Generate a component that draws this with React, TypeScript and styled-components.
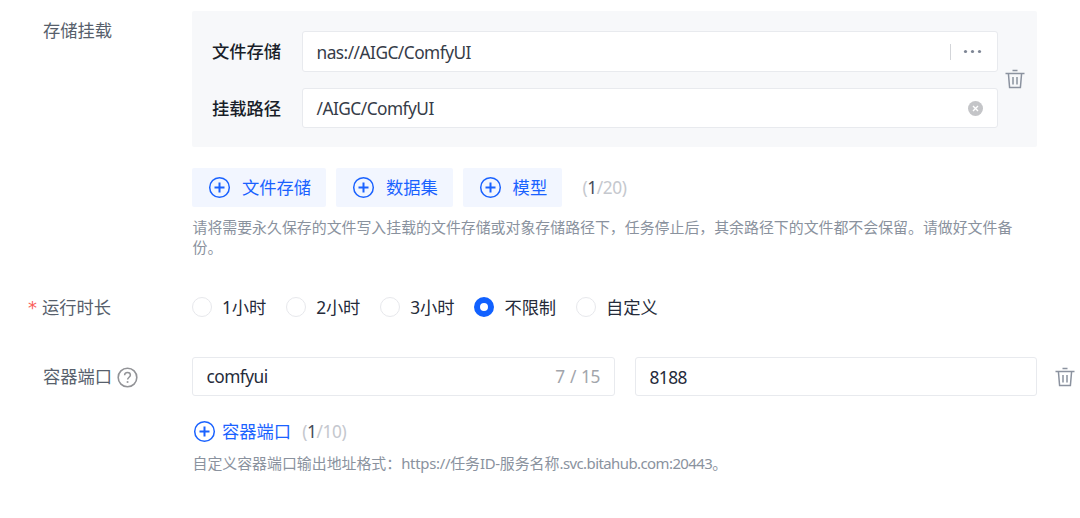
import React from "react";
import styled, { createGlobalStyle } from "styled-components";

const GlobalStyle = createGlobalStyle`
  * { box-sizing: border-box; }
  body {
    margin: 0;
    background: #fff;
    color: #252b3a;
    font-family: "Noto Sans", "Noto Sans CJK SC", sans-serif;
    font-size: 17.3px;
    line-height: 24px;
  }
`;

const Form = styled.main`
  width: 1080px;
  height: 518px;
  padding-top: 11px;
  overflow: hidden;
`;

const FormItem = styled.section<{ $gap?: number }>`
  display: flex;
  align-items: flex-start;
  margin-top: ${(p) => p.$gap ?? 0}px;
`;

const Label = styled.div<{ $top: number; $indent?: number }>`
  flex: 0 0 192px;
  display: flex;
  align-items: center;
  height: 24px;
  margin-top: ${(p) => p.$top}px;
  padding-left: ${(p) => p.$indent ?? 43}px;
  color: #575f6c;
  white-space: nowrap;
  svg { margin-left: 5px; }
`;

const Required = styled.span`
  width: 14px;
  color: #fa5e5a;
  font-family: "DejaVu Sans", sans-serif;
  font-size: 18px;
`;

const Content = styled.div`
  width: 888px;
`;

const MountPanel = styled.div`
  display: flex;
  width: 845px;
  height: 136px;
  padding: 20px 12px 0 20px;
  border-radius: 2px;
  background: #f7f8fa;
`;

const MountFields = styled.div`
  width: 786px;
  display: flex;
  flex-direction: column;
  gap: 16px;
`;

const MountField = styled.div`
  display: flex;
  align-items: center;
`;

const FieldName = styled.span<{ $drop?: number }>`
  width: 90px;
  padding-top: ${(p) => p.$drop ?? 0}px;
  font-weight: 500;
  color: #191e29;
`;

const Field = styled.div<{ $width: number; $height?: number }>`
  display: flex;
  align-items: center;
  justify-content: space-between;
  width: ${(p) => p.$width}px;
  height: ${(p) => p.$height ?? 39}px;
  padding: 0 14px 0 13.5px;
  border: 1px solid #e8eaee;
  border-radius: 3px;
  background: #fff;
`;

const Value = styled.span<{ $drop?: number }>`
  padding-top: ${(p) => p.$drop ?? 1}px;
  letter-spacing: -0.52px;
  white-space: nowrap;
`;

const MountValue = styled(Value)`
  color: #363c48;
`;

const Counter = styled.span`
  color: #a2a5ab;
  letter-spacing: -0.45px;
  word-spacing: 1.2px;
`;

const Picker = styled.span`
  display: flex;
  align-items: center;
  gap: 12px;
  height: 16px;
  padding-left: 12px;
  border-left: 1px solid #d3d5d9;
`;

const RemoveButton = styled.button<{ $top: number; $left: number }>`
  display: block;
  width: 20px;
  height: 20px;
  padding: 0;
  margin: ${(p) => p.$top}px 0 0 ${(p) => p.$left}px;
  border: 0;
  background: none;
`;

const AddBar = styled.div`
  display: flex;
  align-items: center;
  gap: 10px;
  margin-top: 21px;
`;

const AddButton = styled.button`
  display: flex;
  align-items: center;
  gap: 11px;
  height: 39px;
  padding: 0 14.8px 0 16px;
  border: 0;
  border-radius: 2px;
  background: #f2f6ff;
  color: #1a62ff;
  font: inherit;
  white-space: nowrap;
`;

const AddLink = styled.button`
  display: flex;
  align-items: center;
  gap: 6px;
  padding: 0 0 0 1px;
  border: 0;
  background: none;
  color: #1a62ff;
  font: inherit;
`;

const LinkText = styled.span`
  padding-top: 2px;
`;

const Quota = styled.span<{ $left?: number; $drop?: number }>`
  margin-left: ${(p) => p.$left ?? 0}px;
  padding-top: ${(p) => p.$drop ?? 0}px;
  color: #c5c8ce;
  letter-spacing: -0.4px;
  b { font-weight: 400; color: #454b59; }
`;

const Hint = styled.p<{ $top: number }>`
  width: 836px;
  margin: ${(p) => p.$top}px 0 0 0.5px;
  color: #8a929e;
  font-size: 14.92px;
  line-height: 20px;
`;

const Latin = styled.span<{ $spacing?: number }>`
  letter-spacing: ${(p) => p.$spacing ?? -0.3}px;
`;

const RadioGroup = styled.div`
  display: flex;
  align-items: center;
  height: 24px;
  gap: 20px;
`;

const RadioOption = styled.label`
  display: flex;
  align-items: center;
  gap: 10px;
  letter-spacing: -0.1px;
  white-space: nowrap;
`;

const RadioText = styled.span`
  padding-top: 1px;
`;

const RadioDot = styled.span<{ $checked: boolean }>`
  width: 20px;
  height: 20px;
  border-radius: 50%;
  background: #fff;
  border: ${(p) => (p.$checked ? "6px solid #1161ff" : "1px solid #e7e8ec")};
`;

const PortRow = styled.div`
  display: flex;
  gap: 20px;
`;

const LinkBar = styled.div`
  display: flex;
  align-items: center;
  height: 24px;
  margin-top: 23px;
`;

const PlusIcon = () => (
  <svg width="23" height="23" viewBox="0 0 23 23" fill="none" stroke="#1a62ff">
    <circle cx="11.5" cy="11.5" r="9.8" strokeWidth="1.5" />
    <path d="M11.5 6.5v10M6.5 11.5h10" strokeWidth="2" />
  </svg>
);

const TrashIcon = () => (
  <svg width="20" height="20" viewBox="0 0 20 20" fill="none" stroke="#8b929f" strokeWidth="1.5">
    <path d="M7.5 1.5h5M.5 4.5h19M3.4 4.5l1.2 14h10.8l1.2-14M8 8v7.5M12 8v7.5" />
  </svg>
);

const HelpIcon = () => (
  <svg width="21" height="21" viewBox="0 0 21 21" fill="none" stroke="#929397" strokeWidth="1.6">
    <circle cx="10.5" cy="10.5" r="9.3" />
    <path d="M7.6 8.3c0-1.7 1.2-2.8 2.9-2.8s2.9 1.1 2.9 2.6c0 2.2-2.8 2.1-2.8 4.5" strokeWidth="1.5" />
    <path d="M9.7 15h1.7" strokeWidth="1.7" />
  </svg>
);

const MoreIcon = () => (
  <svg width="20" height="6" viewBox="0 0 20 6" fill="#7d8594">
    <circle cx="2.5" cy="2.5" r="1.6" />
    <circle cx="9.5" cy="2.5" r="1.6" />
    <circle cx="16.5" cy="2.5" r="1.6" />
  </svg>
);

const ClearIcon = () => (
  <svg width="15" height="16" viewBox="0 0 15 16">
    <circle cx="7.5" cy="8.5" r="7.5" fill="#c4c5c8" />
    <path d="M5 6l5 5M10 6l-5 5" stroke="#fff" strokeWidth="1.4" />
  </svg>
);

const sources = ["文件存储", "数据集", "模型"];
const durations = ["1小时", "2小时", "3小时", "不限制", "自定义"];

export default function App() {
  return (
    <>
      <GlobalStyle />
      <Form>
        <FormItem>
          <Label $top={8}>存储挂载</Label>
          <Content>
            <MountPanel>
              <MountFields>
                <MountField>
                  <FieldName>文件存储</FieldName>
                  <Field $width={696} $height={41}>
                    <MountValue $drop={2}>nas://AIGC/ComfyUI</MountValue>
                    <Picker><MoreIcon /></Picker>
                  </Field>
                </MountField>
                <MountField>
                  <FieldName $drop={1}>挂载路径</FieldName>
                  <Field $width={696} $height={40}>
                    <MountValue>/AIGC/ComfyUI</MountValue>
                    <ClearIcon />
                  </Field>
                </MountField>
              </MountFields>
              <RemoveButton $top={38} $left={7} aria-label="删除"><TrashIcon /></RemoveButton>
            </MountPanel>
            <AddBar>
              {sources.map((name) => (
                <AddButton key={name}><PlusIcon />{name}</AddButton>
              ))}
              <Quota $left={10.5} $drop={1}>(<b>1</b>/20)</Quota>
            </AddBar>
            <Hint $top={10}>
              请将需要永久保存的文件写入挂载的文件存储或对象存储路径下，任务停止后，其余路径下的文件都不会保留。请做好文件备份。
            </Hint>
          </Content>
        </FormItem>

        <FormItem $gap={38}>
          <Label $top={1} $indent={28}><Required>*</Required>运行时长</Label>
          <RadioGroup>
            {durations.map((name) => (
              <RadioOption key={name}>
                <RadioDot $checked={name === "不限制"} />
                <RadioText>{name}</RadioText>
              </RadioOption>
            ))}
          </RadioGroup>
        </FormItem>

        <FormItem $gap={37}>
          <Label $top={8}>容器端口<HelpIcon /></Label>
          <Content>
            <PortRow>
              <Field $width={423}>
                <Value>comfyui</Value>
                <Counter>7 / 15</Counter>
              </Field>
              <Field $width={402}><Value $drop={2}>8188</Value></Field>
              <RemoveButton $top={10} $left={-2} aria-label="删除"><TrashIcon /></RemoveButton>
            </PortRow>
            <LinkBar>
              <AddLink><PlusIcon /><LinkText>容器端口</LinkText></AddLink>
              <Quota $left={11} $drop={2}>(<b>1</b>/10)</Quota>
            </LinkBar>
            <Hint $top={10}>
              自定义容器端口输出地址格式：<Latin>https://</Latin>任务<Latin>ID-</Latin>服务名称<Latin $spacing={-0.55}>.svc.bitahub.com:20443</Latin>。
            </Hint>
          </Content>
        </FormItem>
      </Form>
    </>
  );
}
